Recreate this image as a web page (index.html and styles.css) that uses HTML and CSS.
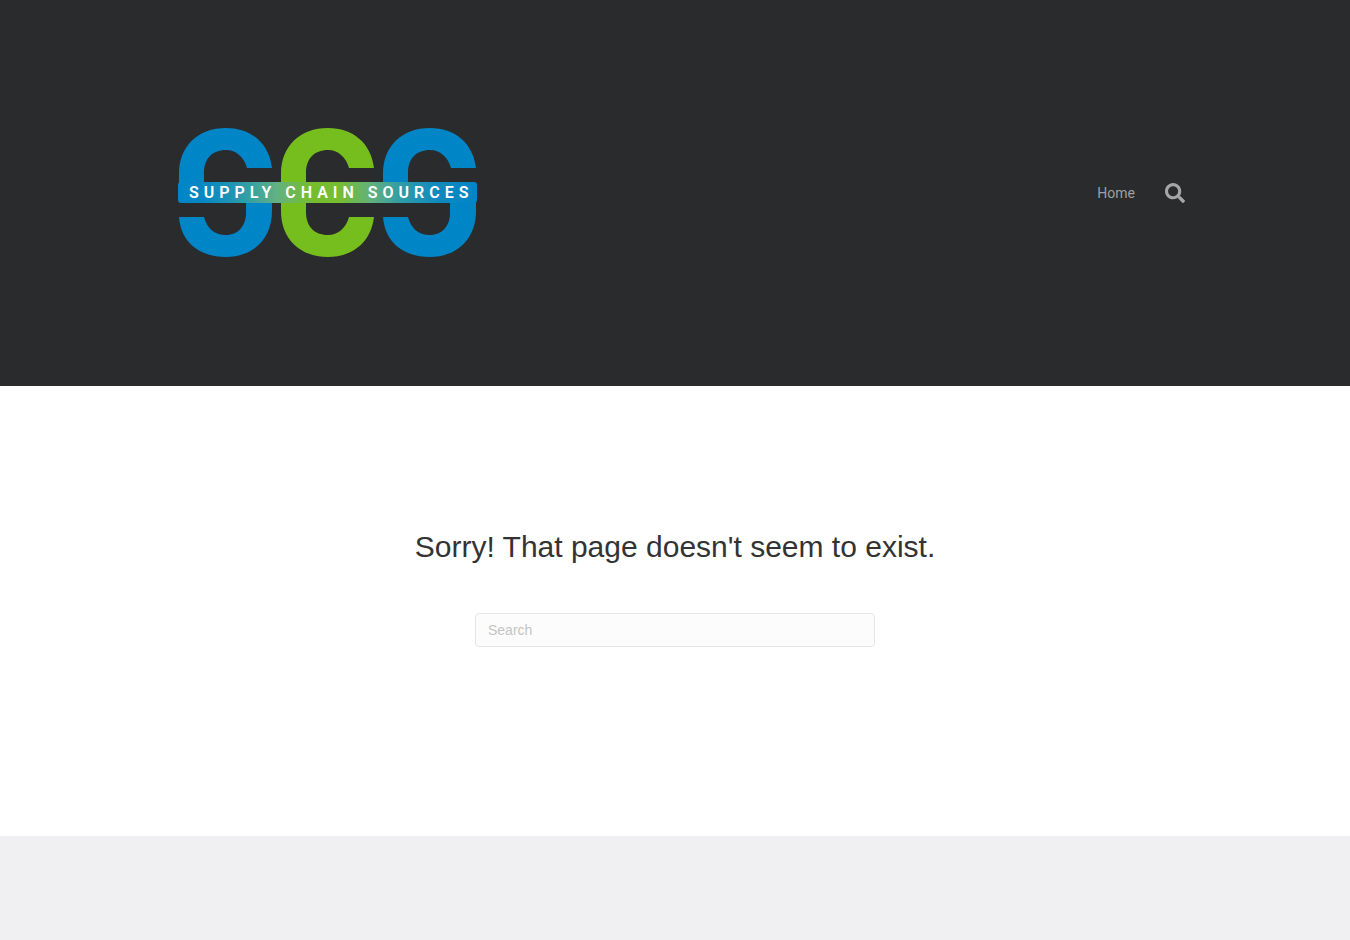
FILE: index.html
```html
<!DOCTYPE html>
<html lang="en">
    <head>
        <meta charset="UTF-8">
        <meta name="viewport" content="width=device-width, initial-scale=1">
        <title>Page not found - Supply Chain Sources</title>
        <link rel="stylesheet" href="styles.css">
    </head>
    <body>
        <header class="page-header">
            <div class="header-container">
                <a class="logo" href="#" aria-label="Supply Chain Sources">
                    <svg class="logo-img" viewBox="-13 -97 326 326" width="326" height="326">
                        <defs>
                            <linearGradient id="band">
                                <stop offset="0" stop-color="#0085c7"/>
                                <stop offset="0.09" stop-color="#0888c4"/>
                                <stop offset="0.17" stop-color="#1c93b5"/>
                                <stop offset="0.25" stop-color="#3aa19f"/>
                                <stop offset="0.33" stop-color="#62b183"/>
                                <stop offset="0.44" stop-color="#76bd2c"/>
                                <stop offset="0.54" stop-color="#76bd30"/>
                                <stop offset="0.65" stop-color="#60b07f"/>
                                <stop offset="0.75" stop-color="#2f9ba8"/>
                                <stop offset="0.87" stop-color="#1089bf"/>
                                <stop offset="1" stop-color="#0085c7"/>
                            </linearGradient>
                            <g id="hook">
                                <path d="M1 57V47C1 19 20 1 48 1C73 1 91 16 94 41H69C66 30 58 23 48 23C34 23 26 32 26 46V57Z"/>
                                <path d="M1 90H26C29 101 36 108 48 108C60 108 68 99 68 86V75H94V84C94 112 75 130 48 130C21 130 3 115 1 90Z"/>
                            </g>
                        </defs>
                        <use href="#hook" fill="#0085c7"/>
                        <use href="#hook" x="204" fill="#0085c7"/>
                        <path fill="#76be1d" d="M103 84V47C103 19 122 1 150 1C175 1 193 16 196 41H171C168 30 160 23 150 23C136 23 128 32 128 46V85C128 99 136 108 150 108C160 108 168 101 171 90H196C193 115 175 130 150 130C122 130 103 112 103 84Z"/>
                        <rect x="0" y="55" width="299" height="21" rx="3" fill="url(#band)"/>
                        <text class="logo-text" x="11" y="71">SUPPLY CHAIN SOURCES</text>
                    </svg>
                </a>
                <nav class="page-nav">
                    <a class="nav-link" href="#">Home</a>
                    <a class="nav-search" href="#" aria-label="Search">
                        <svg viewBox="0 0 512 512" width="20" height="20" fill="currentColor">
                            <path d="M505 442.700L405.300 343c-4.500-4.500-10.600-7-17-7H372c27.600-35.300 44-79.700 44-128C416 93.100 322.900 0 208 0S0 93.100 0 208s93.100 208 208 208c48.300 0 92.700-16.400 128-44v16.300c0 6.400 2.500 12.500 7 17l99.700 99.700c9.400 9.400 24.600 9.400 33.900 0l28.300-28.300c9.400-9.400 9.400-24.600.1-34zM208 336c-70.700 0-128-57.200-128-128 0-70.700 57.200-128 128-128 70.700 0 128 57.200 128 128 0 70.700-57.200 128-128 128z"/>
                        </svg>
                    </a>
                </nav>
            </div>
        </header>
        <main class="page-content">
            <h1 class="post-title">Sorry! That page doesn't seem to exist.</h1>
            <form class="searchform" role="search">
                <input class="search-input" type="search" placeholder="Search" aria-label="Search">
            </form>
        </main>
        <footer class="page-footer"></footer>
    </body>
</html>
```
FILE: styles.css
```css
* {
    box-sizing: border-box;
}
body {
    display: flex;
    flex-direction: column;
    min-height: 100vh;
    margin: 0;
    background-color: #f0f0f2;
    color: #333;
    font-family: "Liberation Sans", Arial, sans-serif;
    font-size: 14px;
}
.page-header {
    padding: 30px 20px;
    background-color: #2a2b2d;
}
.header-container {
    display: flex;
    align-items: center;
    justify-content: space-between;
    max-width: 1020px;
    margin: 0 auto;
}
.logo-img {
    display: block;
}
.logo-text {
    fill: #fff;
    font-family: Roboto, sans-serif;
    font-size: 16px;
    font-weight: 600;
    letter-spacing: 5px;
}
.page-nav {
    display: flex;
    align-items: center;
    gap: 30px;
}
.nav-link {
    color: #9fa0a2;
    font-family: Roboto, sans-serif;
    line-height: 18px;
    text-decoration: none;
}
.nav-search {
    display: block;
    color: #a6a6a8;
}
.nav-search svg {
    display: block;
}
.page-content {
    padding: 140px 20px 189px;
    background-color: #fff;
    text-align: center;
}
.post-title {
    margin: 0 0 45px;
    font-size: 30px;
    font-weight: 400;
    line-height: 42px;
}
.searchform {
    max-width: 400px;
    margin: 0 auto;
}
.search-input {
    display: block;
    width: 100%;
    height: 34px;
    padding: 6px 12px;
    border: 1px solid #e6e6e6;
    border-radius: 4px;
    background-color: #fcfcfc;
    font-family: inherit;
    font-size: 14px;
    appearance: none;
}
.search-input::placeholder {
    color: #c4c4c4;
}
.page-footer {
    flex: 1;
    background-color: #f0f0f2;
}
```
